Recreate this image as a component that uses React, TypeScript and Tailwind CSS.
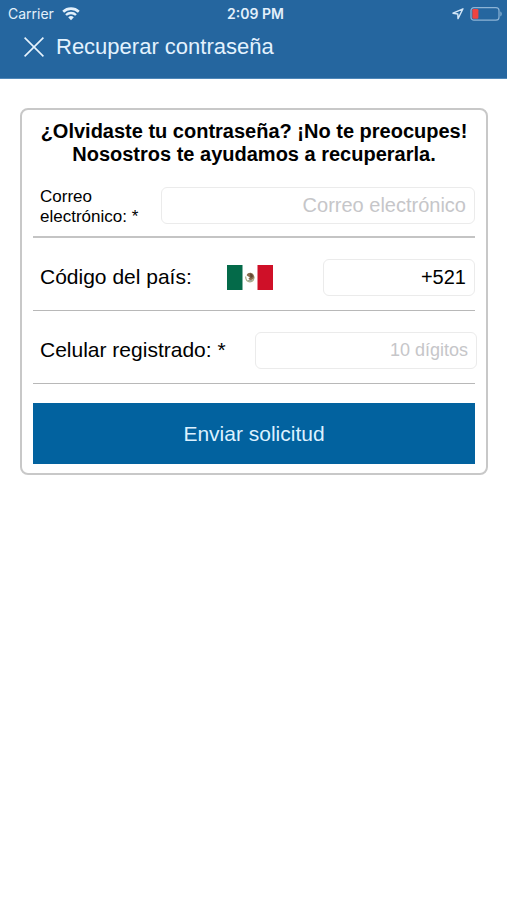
import { useState } from "react"

function WifiIcon() {
  return (
    <svg width="18" height="14" viewBox="0 0 18 14" fill="none" stroke="currentColor" aria-hidden="true">
      <path d="M1.2 4.7a11.4 11.4 0 0 1 15.6 0" strokeWidth="2.6" />
      <path d="M4 8a7.3 7.3 0 0 1 10 0" strokeWidth="2.4" />
      <path d="M9 13.2 6.2 10.3a4.2 4.2 0 0 1 5.6 0Z" fill="currentColor" stroke="none" />
    </svg>
  )
}

function LocationIcon() {
  return (
    <svg width="12" height="12" viewBox="0 0 12 12" fill="none" stroke="#d3e6f7" strokeWidth="1.4" strokeLinejoin="round" aria-hidden="true">
      <path d="M11 .8 1 5.2l4.8.8.2 4.6Z" />
    </svg>
  )
}

function BatteryIcon() {
  return (
    <svg width="33" height="14" viewBox="0 0 33 14" fill="none" aria-hidden="true">
      <rect x="1" y="0.6" width="28" height="12.6" rx="3" stroke="#8db4d6" strokeWidth="1.2" />
      <rect x="2.4" y="2" width="6" height="9.8" rx="1.2" fill="#ee4340" />
      <path d="M30.4 4.6c1.7.6 1.7 4.2 0 4.8Z" fill="#8db4d6" />
    </svg>
  )
}

function MexicoFlag() {
  return (
    <svg width="46" height="25" viewBox="0 0 46 25" role="img" aria-label="México">
      <rect width="46" height="25" fill="#fff" />
      <rect width="15.5" height="25" fill="#046a49" />
      <rect x="30.5" width="15.5" height="25" fill="#cf1028" />
      <path d="M18.6 11.5c.2 3.4 2 5.3 4.4 5.3s4-1.9 4.2-5.3" stroke="#a9ad86" strokeWidth="1.2" fill="none" />
      <path d="M19.6 10.2c1-2 3-2.8 4.6-2.2 2 .4 3 2 2.8 4-.2 1.8-1.6 3.2-3.4 3-1.4-.1-2-.9-2-1.8l1.4-1-1.8-.8Z" fill="#8a6b4d" />
      <path d="M23 8.4c1.8 0 3 1.4 2.8 3.4l-2.2 1.4Z" fill="#5f4632" />
      <path d="M20.6 14.9h4.8l-1 1.7h-2.8Z" fill="#9aa59b" />
    </svg>
  )
}

const inputClass =
  "h-[37px] rounded-md border border-[#ebebeb] bg-white px-2 text-right text-black outline-none placeholder:text-[#c6c6c9]"

export default function App() {
  const [email, setEmail] = useState("")
  const [code, setCode] = useState("+521")
  const [phone, setPhone] = useState("")

  return (
    <div className="min-h-screen bg-white font-['Liberation_Sans',Arial,sans-serif] text-black">
      <header className="h-[79px] border-b border-[#4f87b8] bg-[#25669f] text-white">
        <div className="grid h-[27px] grid-cols-3 items-center pr-1 pl-2 font-[Inter,sans-serif] text-sm text-[#e3f0fb]">
          <div className="flex items-center gap-2">
            <span>Carrier</span>
            <WifiIcon />
          </div>
          <span className="text-center font-semibold">2:09 PM</span>
          <div className="flex items-center justify-end gap-1.5">
            <LocationIcon />
            <BatteryIcon />
          </div>
        </div>
        <div className="flex h-[39px] items-center gap-3 pl-6">
          <button type="button" aria-label="Cerrar">
            <svg width="20" height="20" viewBox="0 0 20 20" fill="none" stroke="#e6f3fd" strokeWidth="1.6" aria-hidden="true">
              <path d="m.6.6 18.8 18.8M19.4.6.6 19.4" />
            </svg>
          </button>
          <h1 className="text-[22px] text-[#e3f2fe]">Recuperar contraseña</h1>
        </div>
      </header>

      <main className="pt-[29px] pr-[19px] pl-5">
        <form
          onSubmit={(e) => e.preventDefault()}
          className="rounded-lg border-2 border-[#c8c8c8] px-[11px] pt-[10px] pb-[9px]"
        >
          <h2 className="text-center text-xl leading-[23px] font-bold">
            ¿Olvidaste tu contraseña? ¡No te preocupes!
            <br />
            Nosostros te ayudamos a recuperarla.
          </h2>

          <div className="flex h-[72px] items-center border-b-2 border-[#c4c4c4] pt-2 pl-[7px]">
            <label htmlFor="email" className="w-[121px] shrink-0 pt-1 text-[17px] leading-5">
              Correo electrónico: *
            </label>
            <input
              id="email"
              type="email"
              placeholder="Correo electrónico"
              value={email}
              onChange={(e) => setEmail(e.target.value)}
              className={`${inputClass} min-w-0 flex-1 text-xl`}
            />
          </div>

          <div className="flex h-[73px] items-center justify-between border-b border-[#b8b8b8] pt-1.5 pl-[7px]">
            <label htmlFor="code" className="w-[187px] text-[21px]">
              Código del país:
            </label>
            <MexicoFlag />
            <input
              id="code"
              type="tel"
              value={code}
              onChange={(e) => setCode(e.target.value)}
              className={`${inputClass} ml-auto w-[152px] text-xl`}
            />
          </div>

          <div className="flex h-[73px] items-center border-b border-[#b8b8b8] pt-1.5 pl-[7px]">
            <label htmlFor="phone" className="w-[215px] shrink-0 text-[21px]">
              Celular registrado: *
            </label>
            <input
              id="phone"
              type="tel"
              placeholder="10 dígitos"
              value={phone}
              onChange={(e) => setPhone(e.target.value)}
              className={`${inputClass} -mr-0.5 min-w-0 flex-1 text-lg`}
            />
          </div>

          <button type="submit" className="mt-[19px] h-[61px] w-full bg-[#02629f] text-[21px] text-[#dcf1ff]">
            Enviar solicitud
          </button>
        </form>
      </main>
    </div>
  )
}
